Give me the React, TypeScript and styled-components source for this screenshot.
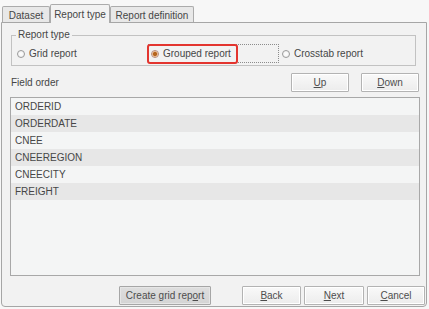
import * as React from 'react';
import styled, { createGlobalStyle } from 'styled-components';

const textColor = '#464646';
const panelBg = '#f2f2f2';

const GlobalStyle = createGlobalStyle`
  html, body {
    margin: 0;
    padding: 0;
    background: #f7f7f7;
  }
  body {
    font-family: "Liberation Sans", Arial, sans-serif;
    font-size: 10px;
    color: ${textColor};
  }
`;

const Window = styled.div`
  width: 429px;
  height: 309px;
  box-sizing: border-box;
  padding: 0 2px 2px 1px;
  display: flex;
  flex-direction: column;
  background: #f7f7f7;
`;

const TabStrip = styled.div`
  height: 23px;
  flex-shrink: 0;
  display: flex;
  align-items: flex-end;
  padding-left: 1px;
  margin-bottom: -1px;
  position: relative;
  z-index: 1;
`;

const Tab = styled.div<{ $width: number; $active?: boolean }>`
  box-sizing: border-box;
  width: ${p => p.$width}px;
  height: ${p => (p.$active ? 19 : 16)}px;
  margin-bottom: ${p => (p.$active ? 0 : 1)}px;
  border: 1px solid #ababab;
  border-bottom: none;
  border-radius: 2px 2px 0 0;
  background: ${p => (p.$active ? panelBg : '#e8e8e8')};
  display: flex;
  align-items: center;
  justify-content: center;
  padding-top: ${p => (p.$active ? 0 : 1)}px;
  white-space: nowrap;
`;

const Panel = styled.div`
  flex: 1;
  min-height: 0;
  border: 1px solid #a6a6a6;
  border-radius: 0 0 4px 4px;
  background: ${panelBg};
  padding: 6px 6px 1px 8px;
  display: flex;
  flex-direction: column;
`;

const GroupBox = styled.fieldset`
  margin: 0 4px 0 1px;
  padding: 0 2px 2px 2px;
  border: 1px solid #c2c2c2;
  min-inline-size: 0;
`;

const GroupTitle = styled.legend`
  margin-left: 2px;
  padding: 0 2px;
  line-height: 12px;
`;

const RadioRow = styled.div`
  display: grid;
  grid-template-columns: 134px 131px 1fr;
  padding-top: 3px;
`;

const RadioOption = styled.label<{ $focused?: boolean }>`
  position: relative;
  box-sizing: border-box;
  height: 19px;
  display: flex;
  align-items: center;
  gap: 4px;
  padding-left: 2px;
  border: 1px dotted ${p => (p.$focused ? '#8c8c8c' : 'transparent')};
`;

const RadioDot = styled.span<{ $checked?: boolean }>`
  box-sizing: border-box;
  width: 8px;
  height: 8px;
  border-radius: 50%;
  border: 1px solid ${p => (p.$checked ? '#b88a7a' : '#9a9a9a')};
  background: ${p =>
    p.$checked
      ? 'radial-gradient(circle, #b4641e 0 1.6px, #e3a060 2.2px, #f6e6d6 3px)'
      : 'radial-gradient(circle, #ffffff 0, #ececec 100%)'};
`;

const Highlight = styled.span`
  position: absolute;
  left: -2px;
  top: -1px;
  width: 91px;
  height: 20px;
  box-sizing: border-box;
  border: 2px solid #e3352f;
  border-radius: 3px;
  pointer-events: none;
`;

const OrderRow = styled.div`
  display: flex;
  align-items: center;
  margin-top: 7px;
  margin-right: 1px;
  gap: 12px;
`;

const Label = styled.span`
  flex: 1;
  padding-left: 1px;
`;

const Button = styled.button<{ $width: number; $pressed?: boolean }>`
  box-sizing: border-box;
  width: ${p => p.$width}px;
  height: 19px;
  padding: 0;
  font: inherit;
  color: #4d4d4d;
  border: 1px solid ${p => (p.$pressed ? '#a6a6a6' : '#b3b3b3')};
  border-radius: 1px;
  background: ${p =>
    p.$pressed ? 'linear-gradient(#dedede, #d4d4d4)' : 'linear-gradient(#f9f9f9, #ececec)'};
  box-shadow: inset 0 0 0 1px ${p => (p.$pressed ? '#e6e6e6' : '#ffffff')};
`;

const Key = styled.span`
  text-decoration: underline;
`;

const FieldList = styled.div`
  flex: 1;
  margin-top: 5px;
  border: 1px solid #a8a8a8;
  background: #f4f5f5;
`;

const FieldRow = styled.div<{ $shaded: boolean }>`
  height: 17px;
  line-height: 17px;
  padding-left: 4px;
  background: ${p => (p.$shaded ? '#e7e7e7' : 'transparent')};
`;

const Footer = styled.div`
  display: flex;
  justify-content: flex-end;
  align-items: center;
  margin: 10px -5px 0 0;
  gap: 3px;
`;

const fields = ['ORDERID', 'ORDERDATE', 'CNEE', 'CNEEREGION', 'CNEECITY', 'FREIGHT'];

const App = () => (
  <>
    <GlobalStyle />
    <Window>
      <TabStrip>
        <Tab $width={48}>Dataset</Tab>
        <Tab $width={60} $active>Report type</Tab>
        <Tab $width={84}>Report definition</Tab>
      </TabStrip>
      <Panel>
        <GroupBox>
          <GroupTitle>Report type</GroupTitle>
          <RadioRow>
            <RadioOption>
              <RadioDot />
              Grid report
            </RadioOption>
            <RadioOption $focused>
              <RadioDot $checked />
              Grouped report
              <Highlight />
            </RadioOption>
            <RadioOption>
              <RadioDot />
              Crosstab report
            </RadioOption>
          </RadioRow>
        </GroupBox>
        <OrderRow>
          <Label>Field order</Label>
          <Button $width={58}><Key>U</Key>p</Button>
          <Button $width={58}><Key>D</Key>own</Button>
        </OrderRow>
        <FieldList>
          {fields.map((name, i) => (
            <FieldRow key={name} $shaded={i % 2 === 1}>{name}</FieldRow>
          ))}
        </FieldList>
        <Footer>
          <Button $width={92} $pressed style={{ marginRight: 28 }}>
            Create grid rep<Key>o</Key>rt
          </Button>
          <Button $width={59}><Key>B</Key>ack</Button>
          <Button $width={60}><Key>N</Key>ext</Button>
          <Button $width={58}><Key>C</Key>ancel</Button>
        </Footer>
      </Panel>
    </Window>
  </>
);

export default App;
